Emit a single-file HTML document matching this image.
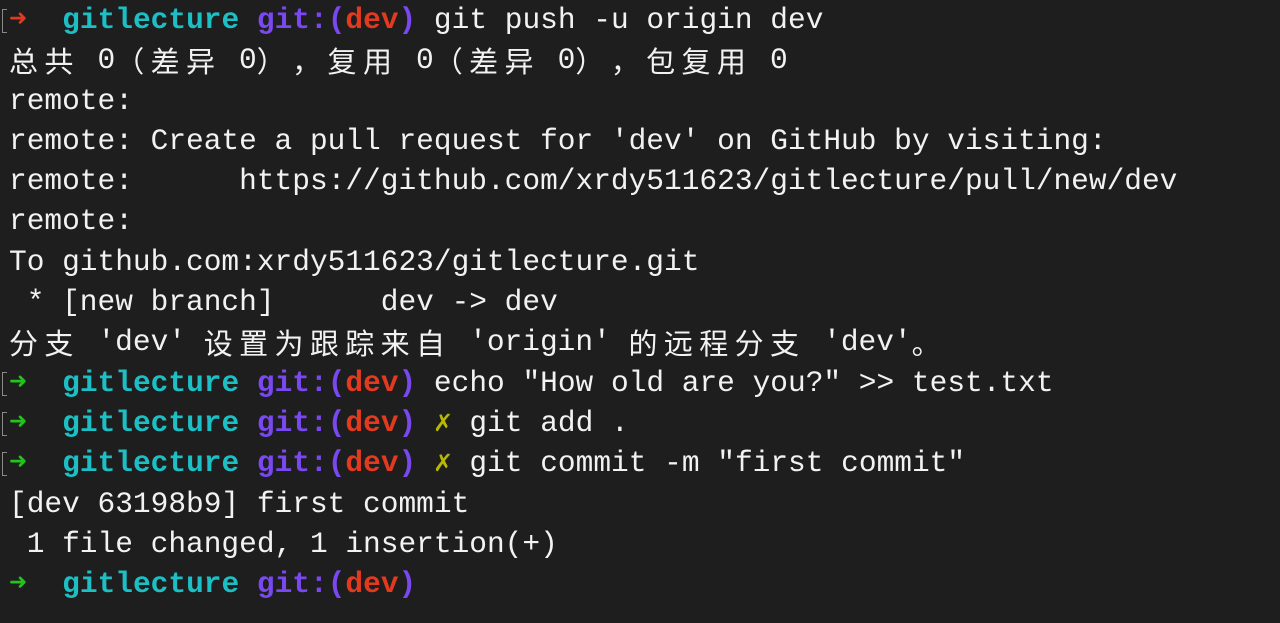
<!DOCTYPE html>
<html><head><meta charset="utf-8"><style>
html,body{margin:0;padding:0;background:#1e1e1e;width:1280px;height:623px;overflow:hidden}
.t{position:absolute;left:9px;top:0;font-family:"Liberation Mono","Noto Sans CJK SC",monospace;font-size:29.5px;color:#f2f2f2}
.t div{height:40.3px;line-height:40.3px;white-space:pre;overflow:visible}
i{font-style:normal;display:inline-block;width:35.4px;font-family:"Noto Sans CJK SC",sans-serif;font-size:29px;line-height:40.3px;vertical-align:top}
.g{color:#23c21c;font-weight:bold}.a{color:#e23a1e;font-weight:bold}
.c{color:#1bbfc4;font-weight:bold}.p{color:#7a48f0;font-weight:bold}.y{color:#b8b800;font-weight:bold}
.br{position:absolute;left:2px;width:4px;height:22px;border:1.5px solid #888;border-right:none}
</style></head><body>
<div class="br" style="top:9px"></div>
<div class="br" style="top:372px"></div>
<div class="br" style="top:412px"></div>
<div class="br" style="top:452px"></div>
<div class="t"><div><span class="a">➜</span>  <span class="c">gitlecture</span> <span class="p">git:(</span><span class="a">dev</span><span class="p">)</span> git push -u origin dev</div><div><i>总</i><i>共</i> 0<i>（</i><i>差</i><i>异</i> 0<i>）</i><i>，</i><i>复</i><i>用</i> 0<i>（</i><i>差</i><i>异</i> 0<i>）</i><i>，</i><i>包</i><i>复</i><i>用</i> 0</div><div>remote:</div><div>remote: Create a pull request for 'dev' on GitHub by visiting:</div><div>remote:      https://github.com/xrdy511623/gitlecture/pull/new/dev</div><div>remote:</div><div>To github.com:xrdy511623/gitlecture.git</div><div> * [new branch]      dev -&gt; dev</div><div><i>分</i><i>支</i> 'dev' <i>设</i><i>置</i><i>为</i><i>跟</i><i>踪</i><i>来</i><i>自</i> 'origin' <i>的</i><i>远</i><i>程</i><i>分</i><i>支</i> 'dev'<i>。</i></div><div><span class="g">➜</span>  <span class="c">gitlecture</span> <span class="p">git:(</span><span class="a">dev</span><span class="p">)</span> echo "How old are you?" &gt;&gt; test.txt</div><div><span class="g">➜</span>  <span class="c">gitlecture</span> <span class="p">git:(</span><span class="a">dev</span><span class="p">)</span> <span class="y">✗</span> git add .</div><div><span class="g">➜</span>  <span class="c">gitlecture</span> <span class="p">git:(</span><span class="a">dev</span><span class="p">)</span> <span class="y">✗</span> git commit -m "first commit"</div><div>[dev 63198b9] first commit</div><div> 1 file changed, 1 insertion(+)</div><div><span class="g">➜</span>  <span class="c">gitlecture</span> <span class="p">git:(</span><span class="a">dev</span><span class="p">)</span></div></div>
</body></html>
